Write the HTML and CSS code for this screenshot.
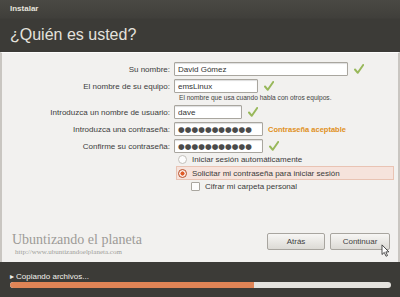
FILE: index.html
```html
<html>
  <head>
    <title>Instalar</title>
    <link rel="stylesheet" href="styles.css">
  </head>
  <body>
    <div class="window">
      <header class="titlebar">
        <p class="app">Instalar</p>
        <h1>¿Quién es usted?</h1>
      </header>

      <section class="content">
        <div class="form">
          <div class="row">
            <label>Su nombre:</label>
            <span class="field"><input class="w-name" value="David Gómez"><svg class="check" viewBox="0 0 10 10"><path d="M1 5.5 L3.8 8.8 L9.2 1" /></svg></span>
          </div>
          <div class="row">
            <label>El nombre de su equipo:</label>
            <span class="field"><input class="w-host" value="emsLinux"><svg class="check" viewBox="0 0 10 10"><path d="M1 5.5 L3.8 8.8 L9.2 1" /></svg></span>
          </div>
          <p class="hint">El nombre que usa cuando habla con otros equipos.</p>
          <div class="row">
            <label>Introduzca un nombre de usuario:</label>
            <span class="field"><input class="w-user" value="dave"><svg class="check" viewBox="0 0 10 10"><path d="M1 5.5 L3.8 8.8 L9.2 1" /></svg></span>
          </div>
          <div class="row">
            <label>Introduzca una contraseña:</label>
            <span class="field"><span class="input w-pass dots">●●●●●●●●●●●</span><span class="ok">Contraseña aceptable</span></span>
          </div>
          <div class="row">
            <label>Confirme su contraseña:</label>
            <span class="field"><span class="input w-pass dots">●●●●●●●●●●●</span><svg class="check" viewBox="0 0 10 10"><path d="M1 5.5 L3.8 8.8 L9.2 1" /></svg></span>
          </div>

          <div class="options">
            <p class="option"><span class="radio"></span>Iniciar sesión automáticamente</p>
            <p class="option selected"><span class="radio on"></span>Solicitar mi contraseña para iniciar sesión</p>
            <p class="option sub"><span class="box"></span>Cifrar mi carpeta personal</p>
          </div>
        </div>

        <footer class="bottom">
          <div class="brand">
            <p class="brand-name">Ubuntizando el planeta</p>
            <p class="brand-url">http://www.ubuntizandoelplaneta.com</p>
          </div>
          <div class="buttons">
            <button>Atrás</button>
            <button>Continuar</button>
          </div>
        </footer>
        <svg class="cursor" viewBox="0 0 10 16"><path d="M1 1 L1 12 L3.6 9.6 L5.6 14 L7.3 13.2 L5.4 9 L8.8 9 Z" fill="#fff" stroke="#222" stroke-width="0.9" stroke-linejoin="round" /></svg>
      </section>

      <section class="status">
        <p class="step"><span class="arrow">▸</span>Copiando archivos...</p>
        <div class="bar"><div class="fill" style="width: 64%"></div></div>
      </section>
    </div>
  </body>
</html>
```

FILE: styles.css
```css
body { margin: 0; padding: 0; background-color: #3c3b37; font-family: "Liberation Sans", "DejaVu Sans", sans-serif; }
p, h1 { margin: 0; }
.window {
  width: 400px;
  height: 297px;
  display: flex;
  flex-direction: column;
  overflow: hidden;
}
.titlebar {
  height: 52px;
  background: linear-gradient(#4a4944 0, #403f3b 18px, #3c3b37 19px);
  color: #dfdbd2;
  padding-left: 10px;
  box-sizing: border-box;
}
.app {
  font-size: 8px;
  font-weight: bold;
  padding-top: 4px;
  height: 16px;
  box-sizing: border-box;
  color: #e6e3dc;
}
h1 {
  font-weight: normal;
  font-size: 16px;
  margin-top: 10px;
  color: #e4e2dd;
}
.content {
  position: relative;
  height: 210px;
  background-color: #f2f1ef;
  border-top: 1px solid #fdfdfc;
  border-left: 2px solid #c9c6c1;
  border-right: 2px solid #c9c6c1;
  box-sizing: border-box;
  display: flex;
  flex-direction: column;
  justify-content: space-between;
}
.form {
  padding-top: 9px;
  font-size: 8px;
  color: #3c3c3c;
}
.row {
  display: grid;
  grid-template-columns: 172px auto;
  align-items: center;
  height: 14px;
  margin-bottom: 3px;
}
.row label {
  text-align: right;
  padding-right: 4px;
}
.field {
  display: flex;
  align-items: center;
}
input, .input {
  height: 14px;
  box-sizing: border-box;
  border: 1px solid #a9a69f;
  border-radius: 1px;
  background: #fff;
  font: 8px "Liberation Sans", sans-serif;
  color: #333;
  padding: 0 3px;
  box-shadow: inset 0 1px 1px #ddd;
}
.w-name { width: 174px; }
.w-host { width: 84px; }
.w-user { width: 68px; }
.w-pass { width: 89px; }
.dots {
  display: flex;
  align-items: center;
  font: 7.6px "DejaVu Sans", sans-serif;
  letter-spacing: 0.1px;
  color: #4a4a4a;
  overflow: hidden;
  white-space: nowrap;
}
.check {
  width: 10px;
  height: 10px;
  margin-left: 6px;
  fill: none;
  stroke: #98b85a;
  stroke-width: 2;
  stroke-linecap: round;
  stroke-linejoin: round;
}
.ok {
  margin-left: 5px;
  color: #e0901c;
  font-weight: bold;
  font-size: 7.5px;
}
.hint {
  font-size: 6.6px;
  margin: -2px 0 2px 177px;
  height: 9px;
  color: #444;
}
.options {
  margin-left: 174px;
  margin-top: -3px;
  width: 218px;
}
.option {
  display: flex;
  align-items: center;
  height: 13px;
  padding-left: 2px;
  font-size: 8px;
  color: #3a3a3a;
}
.option.selected {
  height: 14px;
  background-color: #f6e3dc;
  border: 1px solid #e9c3b3;
  box-sizing: border-box;
  padding-left: 1px;
}
.option.sub {
  padding-left: 15px;
}
.radio {
  width: 7px;
  height: 7px;
  border-radius: 50%;
  border: 1px solid #c3c0ba;
  background: #fcfcfc;
  margin-right: 5px;
}
.radio.on {
  border-color: #b5502a;
  background: radial-gradient(circle, #e05a25 0, #e05a25 1.8px, #fbe9e1 2.3px);
}
.box {
  width: 7px;
  height: 7px;
  border: 1px solid #a9a69f;
  border-radius: 1px;
  background: #fdfdfd;
  margin-right: 5px;
}
.bottom {
  display: flex;
  justify-content: space-between;
  align-items: flex-end;
  padding: 0 8px 11px 10px;
}
.brand {
  margin-bottom: -5px;
}
.brand-name {
  font: 14px "Liberation Serif", serif;
  color: #9d9b97;
}
.brand-url {
  font: 7px "Liberation Serif", serif;
  color: #a09e9a;
  margin-left: 3px;
}
.buttons {
  display: flex;
  gap: 5px;
  margin-bottom: 1px;
}
button {
  width: 58px;
  height: 17px;
  border: 1px solid #a8a59f;
  border-radius: 2px;
  background: linear-gradient(#f7f6f4, #dcdad5);
  font: 8px "Liberation Sans", sans-serif;
  color: #3f3f3f;
  padding: 0;
}
.buttons button + button { width: 60px; }
.cursor {
  position: absolute;
  left: 379px;
  top: 191px;
  width: 9px;
  height: 14px;
}
.status {
  flex: 1;
  background-color: #3c3b37;
  padding: 9px 8px 0 10px;
  color: #f1f0ec;
}
.step {
  font-size: 8px;
  height: 11px;
  display: flex;
  align-items: center;
}
.arrow {
  font-size: 8px;
  margin-right: 2px;
}
.bar {
  height: 6px;
  border-radius: 3px;
  background-color: #e4e2de;
  overflow: hidden;
  width: 381px;
}
.fill {
  height: 100%;
  background-color: #e08456;
  border-radius: 3px 0 0 3px;
}
```
